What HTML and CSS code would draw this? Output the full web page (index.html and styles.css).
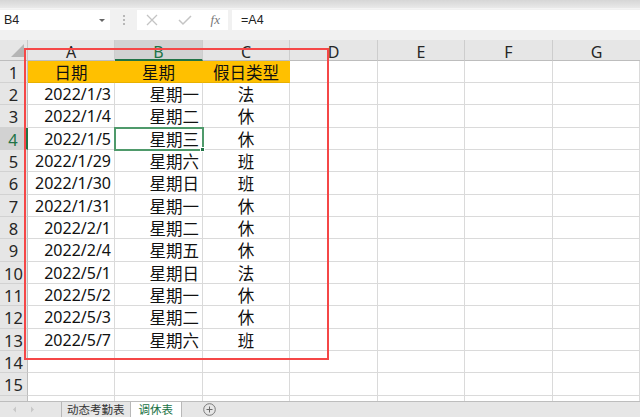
FILE: index.html
```html
<!DOCTYPE html>
<html>
<head>
<meta charset="utf-8">
<link rel="stylesheet" href="styles.css">
</head>
<body>
<div class="app">
  <div class="topstrip"></div>
  <div class="fbar">
    <div class="namebox"><span>B4</span><span class="caret"></span></div>
    <div class="grip"><i></i><i></i><i></i></div>
    <div class="fbtns">
      <svg width="14" height="14" viewBox="0 0 14 14"><path d="M2 2L12 12M12 2L2 12" stroke="#c4c4c4" stroke-width="1.3" fill="none"/></svg>
      <svg width="16" height="14" viewBox="0 0 16 14"><path d="M2 7L6 11L14 3" stroke="#c4c4c4" stroke-width="1.5" fill="none"/></svg>
      <span class="fx">fx</span>
    </div>
    <div class="finput">=A4</div>
  </div>
  <div class="sheet">
    <div class="grid">
      <div class="corner"><span class="tri"></span></div>
      <div class="ch">A</div><div class="ch sel">B</div><div class="ch">C</div><div class="ch">D</div><div class="ch">E</div><div class="ch">F</div><div class="ch last">G</div>

      <div class="rh">1</div><div class="c hd">日期</div><div class="c hd">星期</div><div class="c hd">假日类型</div><div class="c"></div><div class="c"></div><div class="c"></div><div class="c"></div>
      <div class="rh">2</div><div class="c num">2022/1/3</div><div class="c wk">星期一</div><div class="c ty">法</div><div class="c"></div><div class="c"></div><div class="c"></div><div class="c"></div>
      <div class="rh">3</div><div class="c num">2022/1/4</div><div class="c wk">星期二</div><div class="c ty">休</div><div class="c"></div><div class="c"></div><div class="c"></div><div class="c"></div>
      <div class="rh rsel">4</div><div class="c num">2022/1/5</div><div class="c wk active">星期三<span class="handle"></span></div><div class="c ty">休</div><div class="c"></div><div class="c"></div><div class="c"></div><div class="c"></div>
      <div class="rh">5</div><div class="c num">2022/1/29</div><div class="c wk">星期六</div><div class="c ty">班</div><div class="c"></div><div class="c"></div><div class="c"></div><div class="c"></div>
      <div class="rh">6</div><div class="c num">2022/1/30</div><div class="c wk">星期日</div><div class="c ty">班</div><div class="c"></div><div class="c"></div><div class="c"></div><div class="c"></div>
      <div class="rh">7</div><div class="c num">2022/1/31</div><div class="c wk">星期一</div><div class="c ty">休</div><div class="c"></div><div class="c"></div><div class="c"></div><div class="c"></div>
      <div class="rh">8</div><div class="c num">2022/2/1</div><div class="c wk">星期二</div><div class="c ty">休</div><div class="c"></div><div class="c"></div><div class="c"></div><div class="c"></div>
      <div class="rh">9</div><div class="c num">2022/2/4</div><div class="c wk">星期五</div><div class="c ty">休</div><div class="c"></div><div class="c"></div><div class="c"></div><div class="c"></div>
      <div class="rh">10</div><div class="c num">2022/5/1</div><div class="c wk">星期日</div><div class="c ty">法</div><div class="c"></div><div class="c"></div><div class="c"></div><div class="c"></div>
      <div class="rh">11</div><div class="c num">2022/5/2</div><div class="c wk">星期一</div><div class="c ty">休</div><div class="c"></div><div class="c"></div><div class="c"></div><div class="c"></div>
      <div class="rh">12</div><div class="c num">2022/5/3</div><div class="c wk">星期二</div><div class="c ty">休</div><div class="c"></div><div class="c"></div><div class="c"></div><div class="c"></div>
      <div class="rh">13</div><div class="c num">2022/5/7</div><div class="c wk">星期六</div><div class="c ty">班</div><div class="c"></div><div class="c"></div><div class="c"></div><div class="c"></div>
      <div class="rh">14</div><div class="c"></div><div class="c"></div><div class="c"></div><div class="c"></div><div class="c"></div><div class="c"></div><div class="c"></div>
      <div class="rh">15</div><div class="c"></div><div class="c"></div><div class="c"></div><div class="c"></div><div class="c"></div><div class="c"></div><div class="c"></div>
      <div class="rh"></div><div class="c"></div><div class="c"></div><div class="c"></div><div class="c"></div><div class="c"></div><div class="c"></div><div class="c"></div>
    </div>
    <div class="redbox"></div>
  </div>
  <div class="tabs">
    <div class="nav">
      <svg width="5" height="7" viewBox="0 0 5 7"><path d="M4 0.5L1 3.5L4 6.5Z" fill="#c8c8c8"/></svg>
      <svg width="5" height="7" viewBox="0 0 5 7"><path d="M1 0.5L4 3.5L1 6.5Z" fill="#c8c8c8"/></svg>
    </div>
    <div class="tab">动态考勤表</div>
    <div class="tab on">调休表</div>
    <div class="add">
      <svg width="13" height="13" viewBox="0 0 13 13"><circle cx="6.5" cy="6.5" r="5.8" stroke="#7a7a7a" stroke-width="1" fill="none"/><path d="M6.5 3.5V9.5M3.5 6.5H9.5" stroke="#6a6a6a" stroke-width="1"/></svg>
    </div>
  </div>
</div>
</body>
</html>
```

FILE: styles.css
```css
* { box-sizing: border-box; }
html, body { margin: 0; padding: 0; }
body {
  width: 640px;
  height: 417px;
  overflow: hidden;
  font-family: "Noto Sans", "Noto Sans CJK SC", sans-serif;
  background: #fff;
}
.app { width: 640px; height: 417px; display: flex; flex-direction: column; }
.topstrip {
  height: 9px;
  background: linear-gradient(#d6d6d6, #e9e9e9);
  border-bottom: 1px solid #f4f4f4;
}
.fbar {
  height: 31px;
  background: #f1f1f1;
  display: flex;
  align-items: flex-start;
  padding-top: 1px;
}
.namebox {
  width: 110px;
  height: 20px;
  background: #fff;
  display: flex;
  align-items: center;
  justify-content: space-between;
  padding: 0 5px 0 4px;
  font-size: 12.5px;
  color: #222;
  font-family: "Liberation Sans", sans-serif;
}
.caret {
  width: 0; height: 0;
  border-left: 3px solid transparent;
  border-right: 3px solid transparent;
  border-top: 3px solid #666;
}
.grip {
  width: 27px;
  height: 20px;
  display: flex;
  flex-direction: column;
  align-items: center;
  justify-content: center;
  gap: 2px;
}
.grip i { display: block; width: 2px; height: 2px; background: #b8b8b8; }
.fbtns {
  width: 91px;
  height: 20px;
  background: #fff;
  display: flex;
  align-items: center;
  justify-content: space-between;
  padding: 0 8px 0 8px;
}
.fx {
  font-family: "Liberation Serif", serif;
  font-style: italic;
  font-size: 13px;
  color: #777;
}
.finput {
  margin-left: 4px;
  flex: 1;
  height: 20px;
  background: #fff;
  font-family: "Liberation Sans", sans-serif;
  font-size: 12.5px;
  color: #222;
  padding-left: 9px;
  line-height: 20px;
}
.sheet {
  position: relative;
  height: 361px;
  overflow: hidden;
}
.grid {
  display: grid;
  grid-template-columns: 28px 87px 88px 87px 88px 87px 88px 87px;
  grid-template-rows: 21px 22px 22px 23px 22px 22px 23px 22px 22px 23px 22px 22px 23px 22px 22px 23px 22px;
}
.corner {
  background: #e6e6e6;
  border-right: 1px solid #c8c8c8;
  border-bottom: 1px solid #bdbdbd;
  position: relative;
}
.tri {
  position: absolute;
  right: 3px;
  bottom: 3px;
  width: 0; height: 0;
  border-left: 13px solid transparent;
  border-bottom: 13px solid #b5b5b5;
}
.ch {
  background: #e6e6e6;
  border-right: 1px solid #cdcdcd;
  border-bottom: 1px solid #bdbdbd;
  text-align: center;
  font-size: 16px;
  line-height: 21px;
  color: #262626;
  padding-top: 2px;
}
.ch.sel { background: #d2d2d2; color: #217346; border-bottom: 2px solid #217346; }
.ch.last { border-right: none; }
.rh {
  background: #e6e6e6;
  border-right: 1px solid #bdbdbd;
  border-bottom: 1px solid #d2d2d2;
  text-align: center;
  font-size: 16.5px;
  line-height: 21px;
  color: #262626;
  padding-top: 1px;
}
.rh.rsel { background: #d2d2d2; color: #217346; border-right: 2px solid #217346; }
.c {
  border-right: 1px solid #dadada;
  border-bottom: 1px solid #dadada;
  font-size: 16px;
  line-height: 21px;
  padding-top: 1px;
  color: #111;
  white-space: nowrap;
  overflow: visible;
  position: relative;
}
.hd { background: #ffc000; text-align: center; font-size: 16.5px; border-right-color: #ffc000; border-bottom-color: #e8b000; }
.num { text-align: right; padding-right: 3px; }
.wk { text-align: right; padding-right: 3px; font-size: 16.5px; }
.ty { text-align: center; font-size: 16.5px; }
.active { outline: 2px solid #4f9a6b; outline-offset: -1px; z-index: 2; }
.handle {
  position: absolute;
  right: -3px;
  bottom: -3px;
  width: 5px;
  height: 5px;
  background: #217346;
  border: 1px solid #fff;
}
.redbox {
  position: absolute;
  left: 24px;
  top: 8px;
  width: 305px;
  height: 312px;
  border: 2px solid #f54747;
  z-index: 3;
  pointer-events: none;
}
.tabs {
  height: 16px;
  background: #e6e6e6;
  border-top: 1px solid #bdbdbd;
  display: flex;
  align-items: stretch;
  font-size: 11.5px;
}
.nav {
  width: 62px;
  display: flex;
  gap: 13px;
  padding-left: 12px;
  align-items: center;
  border-right: 1px solid #b8b8b8;
}
.tab {
  padding: 0 5px;
  line-height: 15px;
  color: #333;
  border-right: 1px solid #b8b8b8;
}
.tab.on { background: #fff; color: #217346; padding: 0 8px; }
.add { display: flex; align-items: center; padding-left: 21px; }
```
